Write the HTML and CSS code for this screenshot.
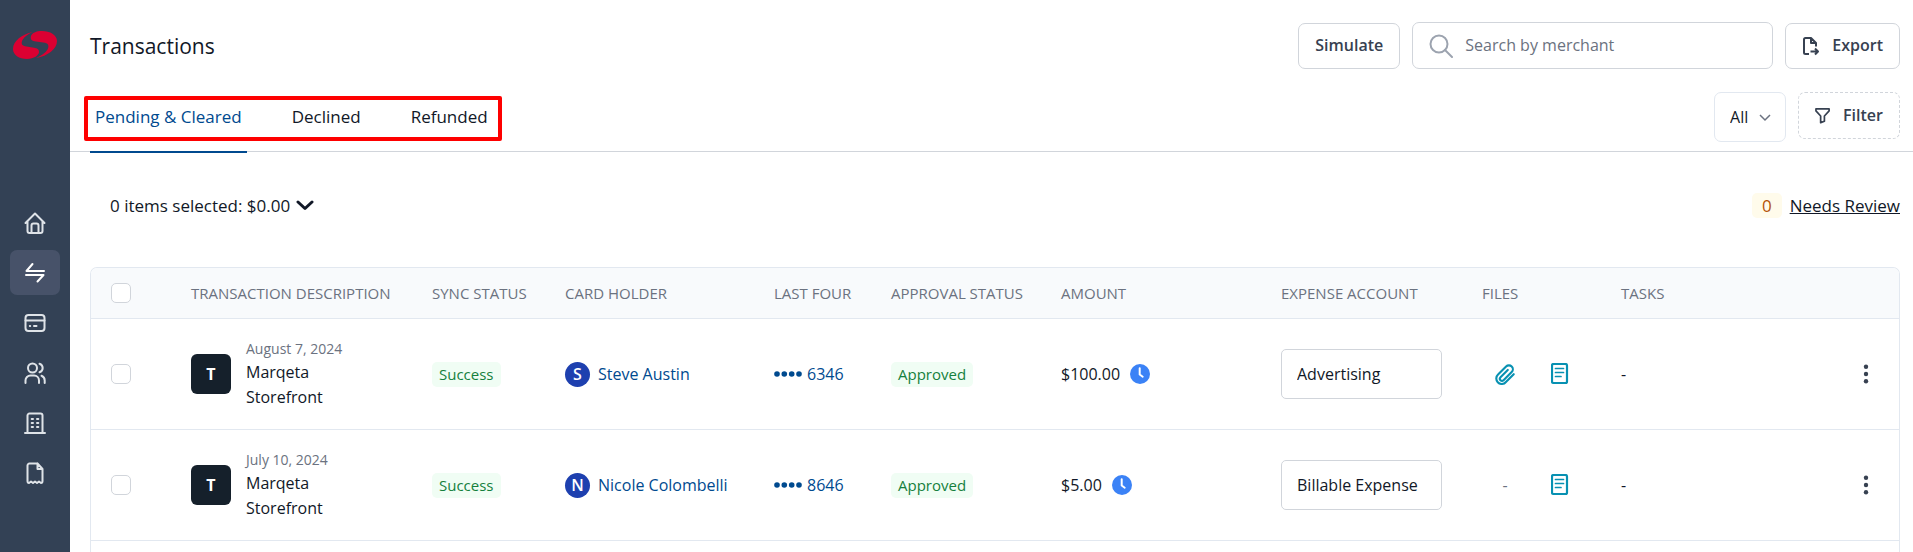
FILE: index.html
```html
<!DOCTYPE html>
<html lang="en">
<head>
<meta charset="utf-8">
<title>Transactions</title>
<link rel="stylesheet" href="styles.css">
</head>
<body>
<svg class="defs" aria-hidden="true">
  <symbol id="clock" viewBox="0 0 20 20"><circle cx="10" cy="10" r="10" fill="#3b82f6"/><path d="M9.7 4.2v6.3l3 2.2" fill="none" stroke="#fff" stroke-width="2" stroke-linecap="round" stroke-linejoin="round"/></symbol>
  <symbol id="clip" viewBox="0 0 24 24"><path d="M21.500 12.200 13 20.700a5.900 5.900 0 0 1-8.900.3 5.900 5.900 0 0 1 .3-8.400l8.800-8.800a4.300 4.300 0 0 1 6.100 6.100l-8.900 8.900a2.300 2.300 0 0 1-3.300-3.300l7.900-7.900" fill="none" stroke="#0891b2" stroke-width="2.300" stroke-linecap="round" stroke-linejoin="round"/></symbol>
  <symbol id="note" viewBox="0 0 18 22"><rect x="1" y="1" width="15" height="19" rx="1.500" fill="none" stroke="#0891b2" stroke-width="2.200"/><path d="M4.500 5.500h8M4.500 9.500h8M4.500 13.500h5.500" stroke="#0891b2" stroke-width="1.700" stroke-linecap="round"/></symbol>
  <symbol id="dots" viewBox="0 0 6 20"><g fill="#374151"><circle cx="3" cy="2.700" r="2.200"/><circle cx="3" cy="10" r="2.200"/><circle cx="3" cy="17.300" r="2.200"/></g></symbol>
</svg>
<div class="app">
  <aside class="sidebar">
    <a class="logo" href="#" aria-label="Home page">
      <svg width="44" height="28" viewBox="0 0 44 28" fill="#dc0032"><path d="M20 1C9 3 0 10 0 18c0 6 6 10 14 10 7 0 12-4 12-7 0-3-2-3.700-5-4.200l-9-1.600C8.500 14.500 8 12 9.500 9 11.500 5.500 15 3 20 1z"/><path d="M18 5c1-3 5-5 11-5 8 0 15 4 15 10 0 8-9 15-21 17 5-2 9.500-5 11.500-8.500 1.500-2.500 1.500-6-2.500-6.700l-9-1.200C19 10 17 8.500 18 5z"/></svg>
    </a>
    <nav class="side-nav">
      <a class="side-link" href="#" aria-label="Home"><svg width="22" height="22" viewBox="0 0 22 22"><path d="M1.500 11 11 1.500l9.500 9.500M3.500 9.500V19a2 2 0 0 0 2 2h11a2 2 0 0 0 2-2V9.500M7.500 21v-7.500a2 2 0 0 1 2-2h3a2 2 0 0 1 2 2V21"/></svg></a>
      <a class="side-link active" href="#" aria-label="Transactions"><svg width="22" height="22" viewBox="0 0 22 22"><path d="M20 9H2.500L8.500 2M2 13h17.500l-6 6.500"/></svg></a>
      <a class="side-link" href="#" aria-label="Cards"><svg width="22" height="22" viewBox="0 0 22 22"><rect x="1.500" y="3" width="19" height="16" rx="3"/><path d="M1.500 8.500h19M5.800 14h.4M10 14h2.500"/></svg></a>
      <a class="side-link" href="#" aria-label="People"><svg width="22" height="22" viewBox="0 0 22 22"><circle cx="8.500" cy="6" r="4.500"/><path d="M1.500 21v-2.500a5 5 0 0 1 5-5h3.500a5 5 0 0 1 5 5V21M15.500 1.700a4.500 4.500 0 0 1 0 8.600M17.500 13.800a5 5 0 0 1 3.200 4.700V21"/></svg></a>
      <a class="side-link" href="#" aria-label="Company"><svg width="22" height="22" viewBox="0 0 22 22"><path d="M1 21h20M3.500 21V3.500a2 2 0 0 1 2-2h11a2 2 0 0 1 2 2V21M7.700 7h1.300M13 7h1.300M7.700 11h1.300M13 11h1.300M7.700 15h1.300M13 15h1.300"/></svg></a>
      <a class="side-link" href="#" aria-label="Receipts"><svg width="22" height="22" viewBox="0 0 22 22"><path d="M13.500 1.500h-8a2 2 0 0 0-2 2V19q0 2 1.500 2l2-1.500 2 1.500 2-1.500 2 1.500 2-1.500 2 1.500q1.500 0 1.500-2V7l-5-5.500V7h5"/></svg></a>
    </nav>
  </aside>
  <main class="main">
    <header class="topbar">
      <h1 class="title">Transactions</h1>
      <div class="actions">
        <button class="btn" type="button">Simulate</button>
        <label class="search">
          <svg width="24" height="24" viewBox="0 0 24 24" fill="none" stroke="#9ca3af" stroke-width="2" stroke-linecap="round"><circle cx="10" cy="10" r="8.500"/><path d="m16 16 7 7"/></svg>
          <input type="text" placeholder="Search by merchant" aria-label="Search by merchant">
        </label>
        <button class="btn" type="button">
          <svg width="18" height="20" viewBox="0 0 18 20" fill="none" stroke="#374151" stroke-width="2" stroke-linejoin="round"><path d="M7 18H3.500A1.500 1.500 0 0 1 2 16.500v-13A1.500 1.500 0 0 1 3.500 2H9l5 5v3.500M9 2v5h5M8.500 15.500H16M13 12.500l3 3-3 3"/></svg>
          Export</button>
      </div>
    </header>
    <div class="tabbar">
      <nav class="tabs">
        <a class="tab current" href="#">Pending &amp; Cleared</a>
        <a class="tab" href="#">Declined</a>
        <a class="tab" href="#">Refunded</a>
      </nav>
      <div class="filters">
        <div class="picker">
          <select aria-label="Show"><option>All</option></select>
          <svg width="12" height="8" viewBox="0 0 12 8" fill="none" stroke="#6b7280" stroke-width="1.500"><path d="m1 1 5 5 5-5"/></svg>
        </div>
        <button class="btn dashed" type="button">
          <svg width="16" height="18" viewBox="1 0 17 19" fill="none" stroke="#374151" stroke-width="1.800" stroke-linejoin="round"><path d="M2 2h14v2l-5 5.500V15l-4 1.500v-7L2 4z"/></svg>
          Filter</button>
      </div>
    </div>
    <div class="summary">
      <button class="selected" type="button">0 items selected: $0.00
        <svg width="18" height="11" viewBox="0 0 18 11" fill="none" stroke="#111827" stroke-width="3" stroke-linecap="round" stroke-linejoin="round"><path d="m2 2 7 6.500L16 2"/></svg></button>
      <div class="review"><span class="count">0</span><a href="#">Needs Review</a></div>
    </div>
    <section class="card">
      <table>
        <colgroup><col class="c-check"><col class="c-desc"><col class="c-sync"><col class="c-holder"><col class="c-last"><col class="c-appr"><col class="c-amount"><col class="c-exp"><col class="c-files"><col class="c-tasks"><col></colgroup>
        <thead>
          <tr><th><input type="checkbox" aria-label="Select all"></th><th>TRANSACTION DESCRIPTION</th><th>SYNC STATUS</th><th>CARD HOLDER</th><th>LAST FOUR</th><th>APPROVAL STATUS</th><th>AMOUNT</th><th>EXPENSE ACCOUNT</th><th>FILES</th><th>TASKS</th><th></th></tr>
        </thead>
        <tbody>
          <tr>
            <td><input type="checkbox" aria-label="Select August 7 transaction"></td>
            <td><div class="desc"><span class="tile">T</span><div><div class="date">August 7, 2024</div><div>Marqeta Storefront</div></div></div></td>
            <td><span class="badge">Success</span></td>
            <td><a class="holder" href="#"><span class="avatar">S</span>Steve Austin</a></td>
            <td><a class="holder four" href="#"><svg width="28" height="6" viewBox="0 0 28 6" fill="#004a8f"><circle cx="3" cy="3" r="2.800"/><circle cx="10.300" cy="3" r="2.800"/><circle cx="17.700" cy="3" r="2.800"/><circle cx="25" cy="3" r="2.800"/></svg>6346</a></td>
            <td><span class="badge">Approved</span></td>
            <td><div class="amount">$100.00<svg width="20" height="20"><use href="#clock"/></svg></div></td>
            <td><input class="account" type="text" value="Advertising" aria-label="Expense account"></td>
            <td><div class="files"><button type="button" class="icon" aria-label="Attachments"><svg width="22" height="22"><use href="#clip"/></svg></button><button type="button" class="icon" aria-label="Note"><svg width="18" height="22"><use href="#note"/></svg></button></div></td>
            <td>-</td>
            <td class="more"><button type="button" class="icon" aria-label="More"><svg width="6" height="20"><use href="#dots"/></svg></button></td>
          </tr>
          <tr>
            <td><input type="checkbox" aria-label="Select July 10 transaction"></td>
            <td><div class="desc"><span class="tile">T</span><div><div class="date">July 10, 2024</div><div>Marqeta Storefront</div></div></div></td>
            <td><span class="badge">Success</span></td>
            <td><a class="holder" href="#"><span class="avatar">N</span>Nicole Colombelli</a></td>
            <td><a class="holder four" href="#"><svg width="28" height="6" viewBox="0 0 28 6" fill="#004a8f"><circle cx="3" cy="3" r="2.800"/><circle cx="10.300" cy="3" r="2.800"/><circle cx="17.700" cy="3" r="2.800"/><circle cx="25" cy="3" r="2.800"/></svg>8646</a></td>
            <td><span class="badge">Approved</span></td>
            <td><div class="amount">$5.00<svg width="20" height="20"><use href="#clock"/></svg></div></td>
            <td><input class="account" type="text" value="Billable Expense" aria-label="Expense account"></td>
            <td><div class="files"><span class="none">-</span><button type="button" class="icon" aria-label="Note"><svg width="18" height="22"><use href="#note"/></svg></button></div></td>
            <td>-</td>
            <td class="more"><button type="button" class="icon" aria-label="More"><svg width="6" height="20"><use href="#dots"/></svg></button></td>
          </tr>
        </tbody>
      </table>
    </section>
  </main>
</div>
</body>
</html>
```
FILE: styles.css
```css
* { box-sizing: border-box; }
body {
  margin: 0;
  font-family: "Segoe UI", "Open Sans", "Noto Sans", sans-serif;
  font-size: 16px;
  line-height: 25px;
  color: #111827;
  background: #fff;
}
button, input, select { font: inherit; color: inherit; }
button { cursor: pointer; }
a { color: inherit; text-decoration: none; }
svg { display: block; flex: none; }
.defs { display: none; }

.app { display: flex; min-height: 100vh; }

.sidebar { flex: none; width: 70px; background: #334155; }
.logo { display: flex; justify-content: center; padding: 31px 0 0; }
.side-nav { display: flex; flex-direction: column; gap: 5px; padding: 141px 10px 0; }
.side-link {
  display: flex;
  align-items: center;
  justify-content: center;
  height: 45px;
  border-radius: 7px;
}
.side-link svg {
  fill: none;
  stroke: #dfe3e8;
  stroke-width: 2;
  stroke-linecap: round;
  stroke-linejoin: round;
}
.side-link.active { background: #475269; }
.side-link.active svg { stroke: #fff; }

.main { flex: 1; min-width: 0; display: flex; flex-direction: column; }

.topbar {
  display: flex;
  align-items: center;
  justify-content: space-between;
  padding: 22px 13px 0 20px;
}
.title { margin: 0; font-size: 21px; font-weight: 500; line-height: 28px; }
.actions { display: flex; align-items: center; gap: 12px; }
.btn {
  display: flex;
  align-items: center;
  gap: 12px;
  height: 46px;
  padding: 0 15px;
  border: 1px solid #d1d5db;
  border-radius: 7px;
  background: #fff;
  color: #374151;
  font-weight: 600;
}
.actions .btn { padding: 0 16px; }
.search {
  display: flex;
  align-items: center;
  gap: 12px;
  width: 361px;
  height: 47px;
  padding: 0 16px;
  border: 1px solid #d1d5db;
  border-radius: 7px;
}
.search input {
  flex: 1;
  min-width: 0;
  padding: 0;
  border: 0;
  outline: 0;
  background: none;
}
.search input::placeholder { color: #6b7280; opacity: 1; }

.tabbar {
  display: flex;
  justify-content: space-between;
  height: 83px;
  padding: 0 13px 0 20px;
  border-bottom: 1px solid #d1d5db;
}
.tabs { position: relative; display: flex; gap: 40px; padding-top: 22px; font-size: 17px; font-weight: 500; }
.tabs::after {
  content: "";
  position: absolute;
  inset: 27px -9px 10px -6px;
  border: 4px solid #fe0000;
  border-radius: 2px;
  pointer-events: none;
}
.tab { height: 62px; padding: 13px 5px 0; }
.tab.current { color: #004a8f; border-bottom: 2px solid #004a8f; }
.filters { display: flex; align-items: flex-start; gap: 12px; padding-top: 23px; }
.picker { position: relative; }
.picker select {
  display: block;
  width: 72px;
  height: 50px;
  padding: 0 15px;
  border: 1px solid #e2e8f0;
  border-radius: 7px;
  background: #fff;
  appearance: none;
}
.picker svg { position: absolute; right: 15px; top: 22px; pointer-events: none; }
.btn.dashed { height: 47px; padding: 0 16px; border-style: dashed; }

.summary {
  display: flex;
  align-items: center;
  justify-content: space-between;
  height: 115px;
  padding: 0 13px 9px 40px;
  font-size: 17px;
  font-weight: 500;
}
.selected {
  display: flex;
  align-items: center;
  gap: 6px;
  padding: 0;
  border: 0;
  background: none;
  font-weight: 500;
}
.review { display: flex; align-items: center; gap: 8px; }
.review a { text-decoration: underline; }
.count { padding: 0 10px; border-radius: 5px; background: #fffbeb; color: #b45309; }

.card {
  flex: 1;
  margin: 0 13px 0 20px;
  border: 1px solid #e2e8f0;
  border-bottom: 0;
  border-radius: 7px 7px 0 0;
  overflow: hidden;
}
table { width: 100%; border-collapse: separate; border-spacing: 0; table-layout: fixed; }
.c-check { width: 80px; }
.c-desc { width: 241px; }
.c-sync { width: 133px; }
.c-holder { width: 209px; }
.c-last { width: 117px; }
.c-appr { width: 170px; }
.c-amount { width: 220px; }
.c-exp { width: 201px; }
.c-files { width: 139px; }
.c-tasks { width: 120px; }
th, td { padding: 0 0 0 20px; border-bottom: 1px solid #e2e8f0; text-align: left; }
th {
  height: 51px;
  background: #f8fafc;
  color: #6b7280;
  font-size: 15px;
  font-weight: 500;
  white-space: nowrap;
}
td { height: 111px; }
input[type="checkbox"] {
  display: block;
  width: 20px;
  height: 20px;
  margin: 0;
  border: 1px solid #d1d5db;
  border-radius: 5px;
  background: #fff;
  appearance: none;
}
.desc { display: flex; align-items: center; gap: 15px; padding-right: 60px; }
.tile {
  flex: none;
  width: 40px;
  border-radius: 6px;
  background: #15202b;
  color: #fff;
  font-weight: 700;
  line-height: 40px;
  text-align: center;
}
.date { color: #6b7280; font-size: 14px; line-height: 22px; }
.badge {
  display: inline-block;
  padding: 0 7px;
  border-radius: 5px;
  background: #f0fdf4;
  color: #15803d;
  font-size: 15px;
  font-weight: 500;
}
.holder { display: flex; align-items: center; gap: 8px; color: #004a8f; }
.holder.four { gap: 5px; }
.avatar {
  width: 25px;
  border-radius: 50%;
  background: #1e40af;
  color: #fff;
  font-weight: 600;
  text-align: center;
}
.amount { display: flex; align-items: center; gap: 10px; }
.account {
  display: block;
  width: 161px;
  height: 50px;
  padding: 0 15px;
  border: 1px solid #d1d5db;
  border-radius: 5px;
}
.files { display: flex; align-items: center; justify-content: space-between; padding: 0 32px 0 12px; }
.none { width: 22px; color: #6b7280; text-align: center; }
.icon { padding: 0; border: 0; background: none; }
.more .icon { display: block; margin: 0 30px 0 auto; }
```
